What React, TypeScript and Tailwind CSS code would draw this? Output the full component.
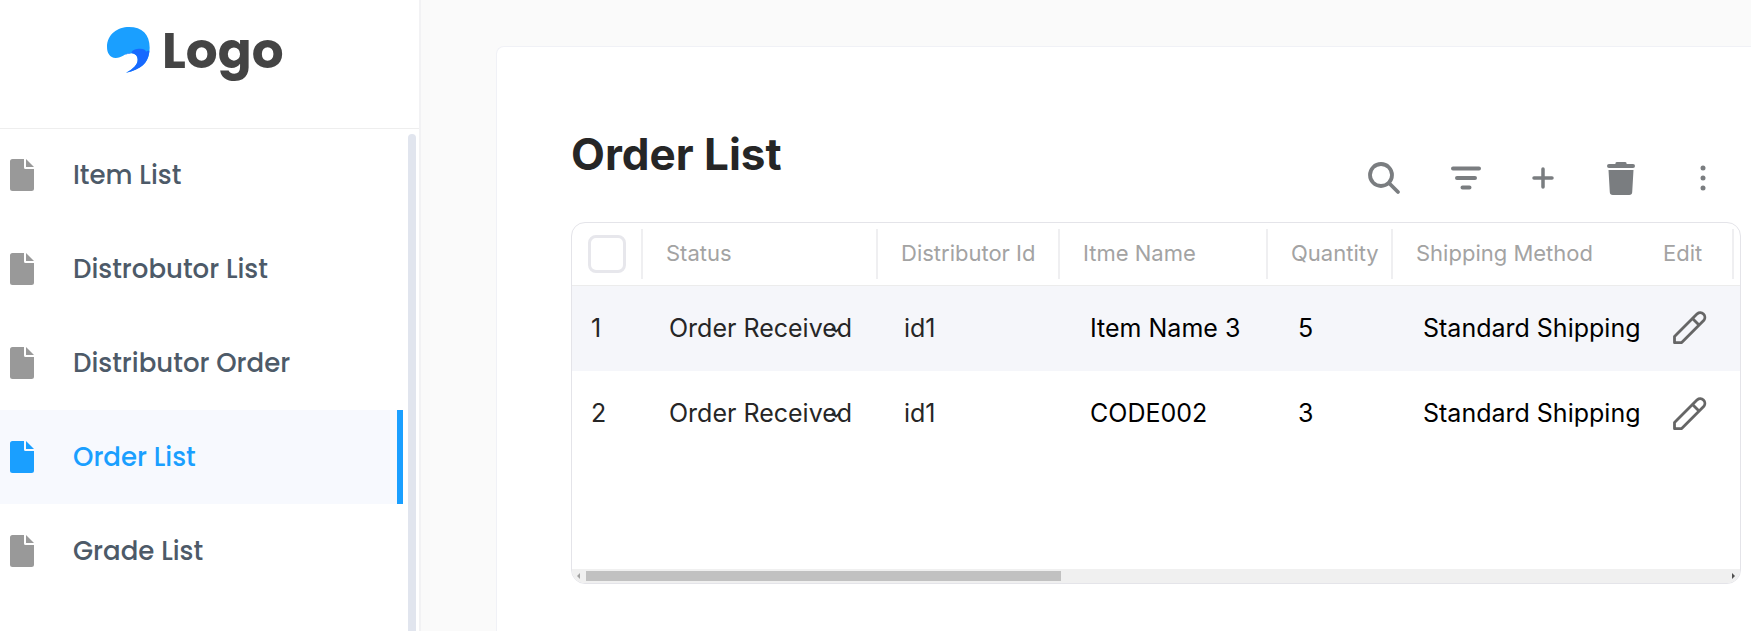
import React from "react";

const navItems = ["Item List", "Distrobutor List", "Distributor Order", "Order List", "Grade List"];
const activeItem = "Order List";

const orders = [
  { id: 1, distributor: "id1", item: "Item Name 3", quantity: 5, shipping: "Standard Shipping" },
  { id: 2, distributor: "id1", item: "CODE002", quantity: 3, shipping: "Standard Shipping" },
];

const columns = ["Status", "Distributor Id", "Itme Name", "Quantity"];

function LogoMark() {
  return (
    <svg width="43" height="46" viewBox="0 0 129 138" aria-hidden="true">
      <path
        fill="#1a9fff"
        d="M0 60C0 22 32 0 66 0c39 0 62 22 62 62 0 43-23 64-71 75 23-12 35-25 35-39 0-14-10-19-22-19-18 1-25 14-44 14C8 92 0 78 0 60Z"
      />
      <path
        fill="#1769ff"
        d="M54 83C66 80 72 80 74 78c-2-3 4-10 16-12 15-2 25 0 27 8 5-3 10-4 10-2-3 38-27 56-70 65 23-12 35-25 35-39 0-14-10-19-22-19-6 0-11 2-16 4Z"
      />
    </svg>
  );
}

function FileIcon() {
  return (
    <svg width="24" height="32" viewBox="0 0 24 32" fill="currentColor" aria-hidden="true">
      <path d="M14 0v8.500A1.500 1.500 0 0 0 15.500 10H24v19.500a2.500 2.500 0 0 1-2.500 2.500h-19A2.500 2.500 0 0 1 0 29.500v-27A2.500 2.500 0 0 1 2.500 0Z" />
      <path d="M16 0v8h8Z" />
    </svg>
  );
}

function SearchIcon() {
  return (
    <svg width="34" height="34" viewBox="0 0 34 34" fill="none" stroke="currentColor" aria-hidden="true">
      <circle cx="14" cy="14" r="11" strokeWidth="3.800" />
      <path d="m22 22 9 9" strokeWidth="3.800" strokeLinecap="round" />
    </svg>
  );
}

function FilterIcon() {
  return (
    <svg width="32" height="24" viewBox="0 0 32 24" fill="none" stroke="currentColor" strokeWidth="4" strokeLinecap="round" aria-hidden="true">
      <path d="M3 2.500h26M7 12h18M12.500 21.500h7" />
    </svg>
  );
}

function PlusIcon() {
  return (
    <svg width="22" height="22" viewBox="0 0 22 22" fill="none" stroke="currentColor" strokeWidth="3.500" strokeLinecap="round" aria-hidden="true">
      <path d="M11 2v18M2 11h18" />
    </svg>
  );
}

function TrashIcon() {
  return (
    <svg width="28" height="33" viewBox="0 0 28 33" fill="currentColor" aria-hidden="true">
      <path d="M10 0h8a1.500 1.500 0 0 1 1.500 2H26a2 2 0 0 1 0 4H2a2 2 0 0 1 0-4h6.500A1.500 1.500 0 0 1 10 0Z" />
      <path d="M1.500 8h25l-1.300 22.200A3 3 0 0 1 22.200 33H5.800a3 3 0 0 1-3-2.800Z" />
    </svg>
  );
}

function MoreIcon() {
  return (
    <svg width="6" height="26" viewBox="0 0 6 26" fill="currentColor" aria-hidden="true">
      <circle cx="3" cy="3" r="2.500" />
      <circle cx="3" cy="13" r="2.500" />
      <circle cx="3" cy="23" r="2.500" />
    </svg>
  );
}

function PencilIcon() {
  return (
    <svg width="34" height="34" viewBox="0 0 34 34" fill="none" stroke="currentColor" strokeWidth="2.800" strokeLinejoin="round" aria-hidden="true">
      <path d="M1.500 31.700V25.500L24.200 2.800a4.700 4.700 0 0 1 6.700 6.500L8.700 31.500Z" />
      <path d="m19.500 7.500 6.500 6.500" />
    </svg>
  );
}

function HeaderCell({ label }: { label: string }) {
  return (
    <th scope="col" className="p-0 font-normal">
      <div className="flex h-[50px] items-center border-r-2 border-[#efeff1] pl-[23px]">{label}</div>
    </th>
  );
}

export default function App() {
  return (
    <div className="flex min-h-screen bg-[#fafafa] font-['Inter',sans-serif]">
      <aside className="flex w-[421px] shrink-0 flex-col border-r-2 border-[#f2f2f4] bg-white">
        <div className="flex h-[129px] items-start gap-3 border-b border-[#eeeeee] pt-[27px] pl-[107px]">
          <LogoMark />
          <span className="font-['Poppins','Inter',sans-serif] text-[50px] leading-[48px] font-bold text-[#444444]">Logo</span>
        </div>
        <div className="flex flex-1">
          <nav className="-mt-px flex-1">
            {navItems.map((item) => (
              <a
                key={item}
                href="#"
                aria-current={item === activeItem ? "page" : undefined}
                className={
                  item === activeItem
                    ? "flex h-[94px] items-center gap-[39px] border-r-[6px] border-[#1a9fff] bg-[#f7f9fe] pl-[10px] text-[#1a9fff]"
                    : "flex h-[94px] items-center gap-[39px] pl-[10px] text-[#999999]"
                }
              >
                <FileIcon />
                <span
                  className={
                    item === activeItem
                      ? "font-['Poppins','Inter',sans-serif] text-[26px] font-medium"
                      : "font-['Poppins','Inter',sans-serif] text-[26px] font-medium text-[#4d5a68]"
                  }
                >
                  {item}
                </span>
              </a>
            ))}
          </nav>
          <div className="mt-[5px] mr-[3px] ml-[5px] w-2 rounded-t-full bg-[#e1e5ee]" />
        </div>
      </aside>

      <main className="flex min-w-0 flex-1 pt-[46px] pl-[75px]">
        <section className="min-w-0 flex-1 rounded-tl-lg border-t border-l border-[#f0f1f6] bg-white pt-[79px] pr-[10px] pl-[74px]">
          <div className="flex h-24 justify-between">
            <h1 className="text-[44px] leading-[56px] font-bold text-[#262626]">Order List</h1>
            <div className="mt-[35px] mr-[35px] flex h-[34px] items-center text-[#7a7d80]">
              <button type="button" aria-label="Search"><SearchIcon /></button>
              <button type="button" aria-label="Filter" className="ml-[49px]"><FilterIcon /></button>
              <button type="button" aria-label="Add" className="ml-[50px]"><PlusIcon /></button>
              <button type="button" aria-label="Delete" className="ml-[53px]"><TrashIcon /></button>
              <button type="button" aria-label="More" className="ml-[65px]"><MoreIcon /></button>
            </div>
          </div>

          <div className="overflow-hidden rounded-[14px] border border-[#e4e4e9]">
            <div className="h-[346px]">
              <table className="w-full table-fixed border-collapse text-left">
                <colgroup>
                  <col className="w-[71px]" />
                  <col className="w-[235px]" />
                  <col className="w-[182px]" />
                  <col className="w-[208px]" />
                  <col className="w-[125px]" />
                  <col className="w-[247px]" />
                  <col />
                </colgroup>
                <thead>
                  <tr className="h-[62px] border-b border-[#ececec] text-[22px] text-[#a3a3a3]">
                    <th className="p-0">
                      <div className="flex h-[50px] items-center border-r-2 border-[#efeff1] pl-4">
                        <input
                          type="checkbox"
                          aria-label="Select all orders"
                          className="size-[38px] appearance-none rounded-lg border-3 border-[#e7e7ec] bg-white"
                        />
                      </div>
                    </th>
                    {columns.map((label) => (
                      <HeaderCell key={label} label={label} />
                    ))}
                    <th scope="col" className="p-0 pl-[23px] font-normal whitespace-nowrap">Shipping Method</th>
                    <th scope="col" className="p-0 pr-[6px] font-normal">
                      <div className="flex h-[50px] items-center border-r-2 border-[#efeff1] pl-[23px]">Edit</div>
                    </th>
                  </tr>
                </thead>
                <tbody className="text-[25px] text-black">
                  {orders.map((order) => (
                    <tr key={order.id} className="h-[86px] odd:bg-[#f5f6fa]">
                      <td className="p-0 pl-[19px] text-[#262626]">{order.id}</td>
                      <td className="p-0 pl-[26px] text-[#262626]">
                        <div className="relative w-[190px]">
                          <select
                            aria-label={`Status of order ${order.id}`}
                            className="block w-full appearance-none bg-transparent"
                            defaultValue="Order Received"
                          >
                            <option>Order Received</option>
                          </select>
                          <svg
                            className="pointer-events-none absolute top-[17px] right-[18px]"
                            width="10"
                            height="6"
                            viewBox="0 0 10 6"
                            fill="none"
                            stroke="currentColor"
                            strokeWidth="2"
                            aria-hidden="true"
                          >
                            <path d="m1 1 4 3.500L9 1" />
                          </svg>
                        </div>
                      </td>
                      <td className="p-0 pl-[26px] text-[#262626]">{order.distributor}</td>
                      <td className="p-0 pl-[30px]">{order.item}</td>
                      <td className="p-0 pl-[30px]">{order.quantity}</td>
                      <td className="p-0 pl-[30px] whitespace-nowrap">{order.shipping}</td>
                      <td className="p-0 pl-[33px]">
                        <button type="button" aria-label={`Edit order ${order.id}`} className="block text-[#666666]">
                          <PencilIcon />
                        </button>
                      </td>
                    </tr>
                  ))}
                </tbody>
              </table>
            </div>
            <div className="flex h-[14px] items-center justify-between bg-[#f0f0f0] px-[5px]">
              <svg width="3" height="6" viewBox="0 0 3 6" fill="#a3a3a3" aria-hidden="true">
                <path d="M3 0v6L0 3Z" />
              </svg>
              <div className="mx-[6px] flex-1">
                <div className="h-[10px] w-5/12 bg-[#c1c1c1]" />
              </div>
              <svg width="3" height="6" viewBox="0 0 3 6" fill="#505050" aria-hidden="true">
                <path d="M0 0v6l3-3Z" />
              </svg>
            </div>
          </div>
        </section>
      </main>
    </div>
  );
}
